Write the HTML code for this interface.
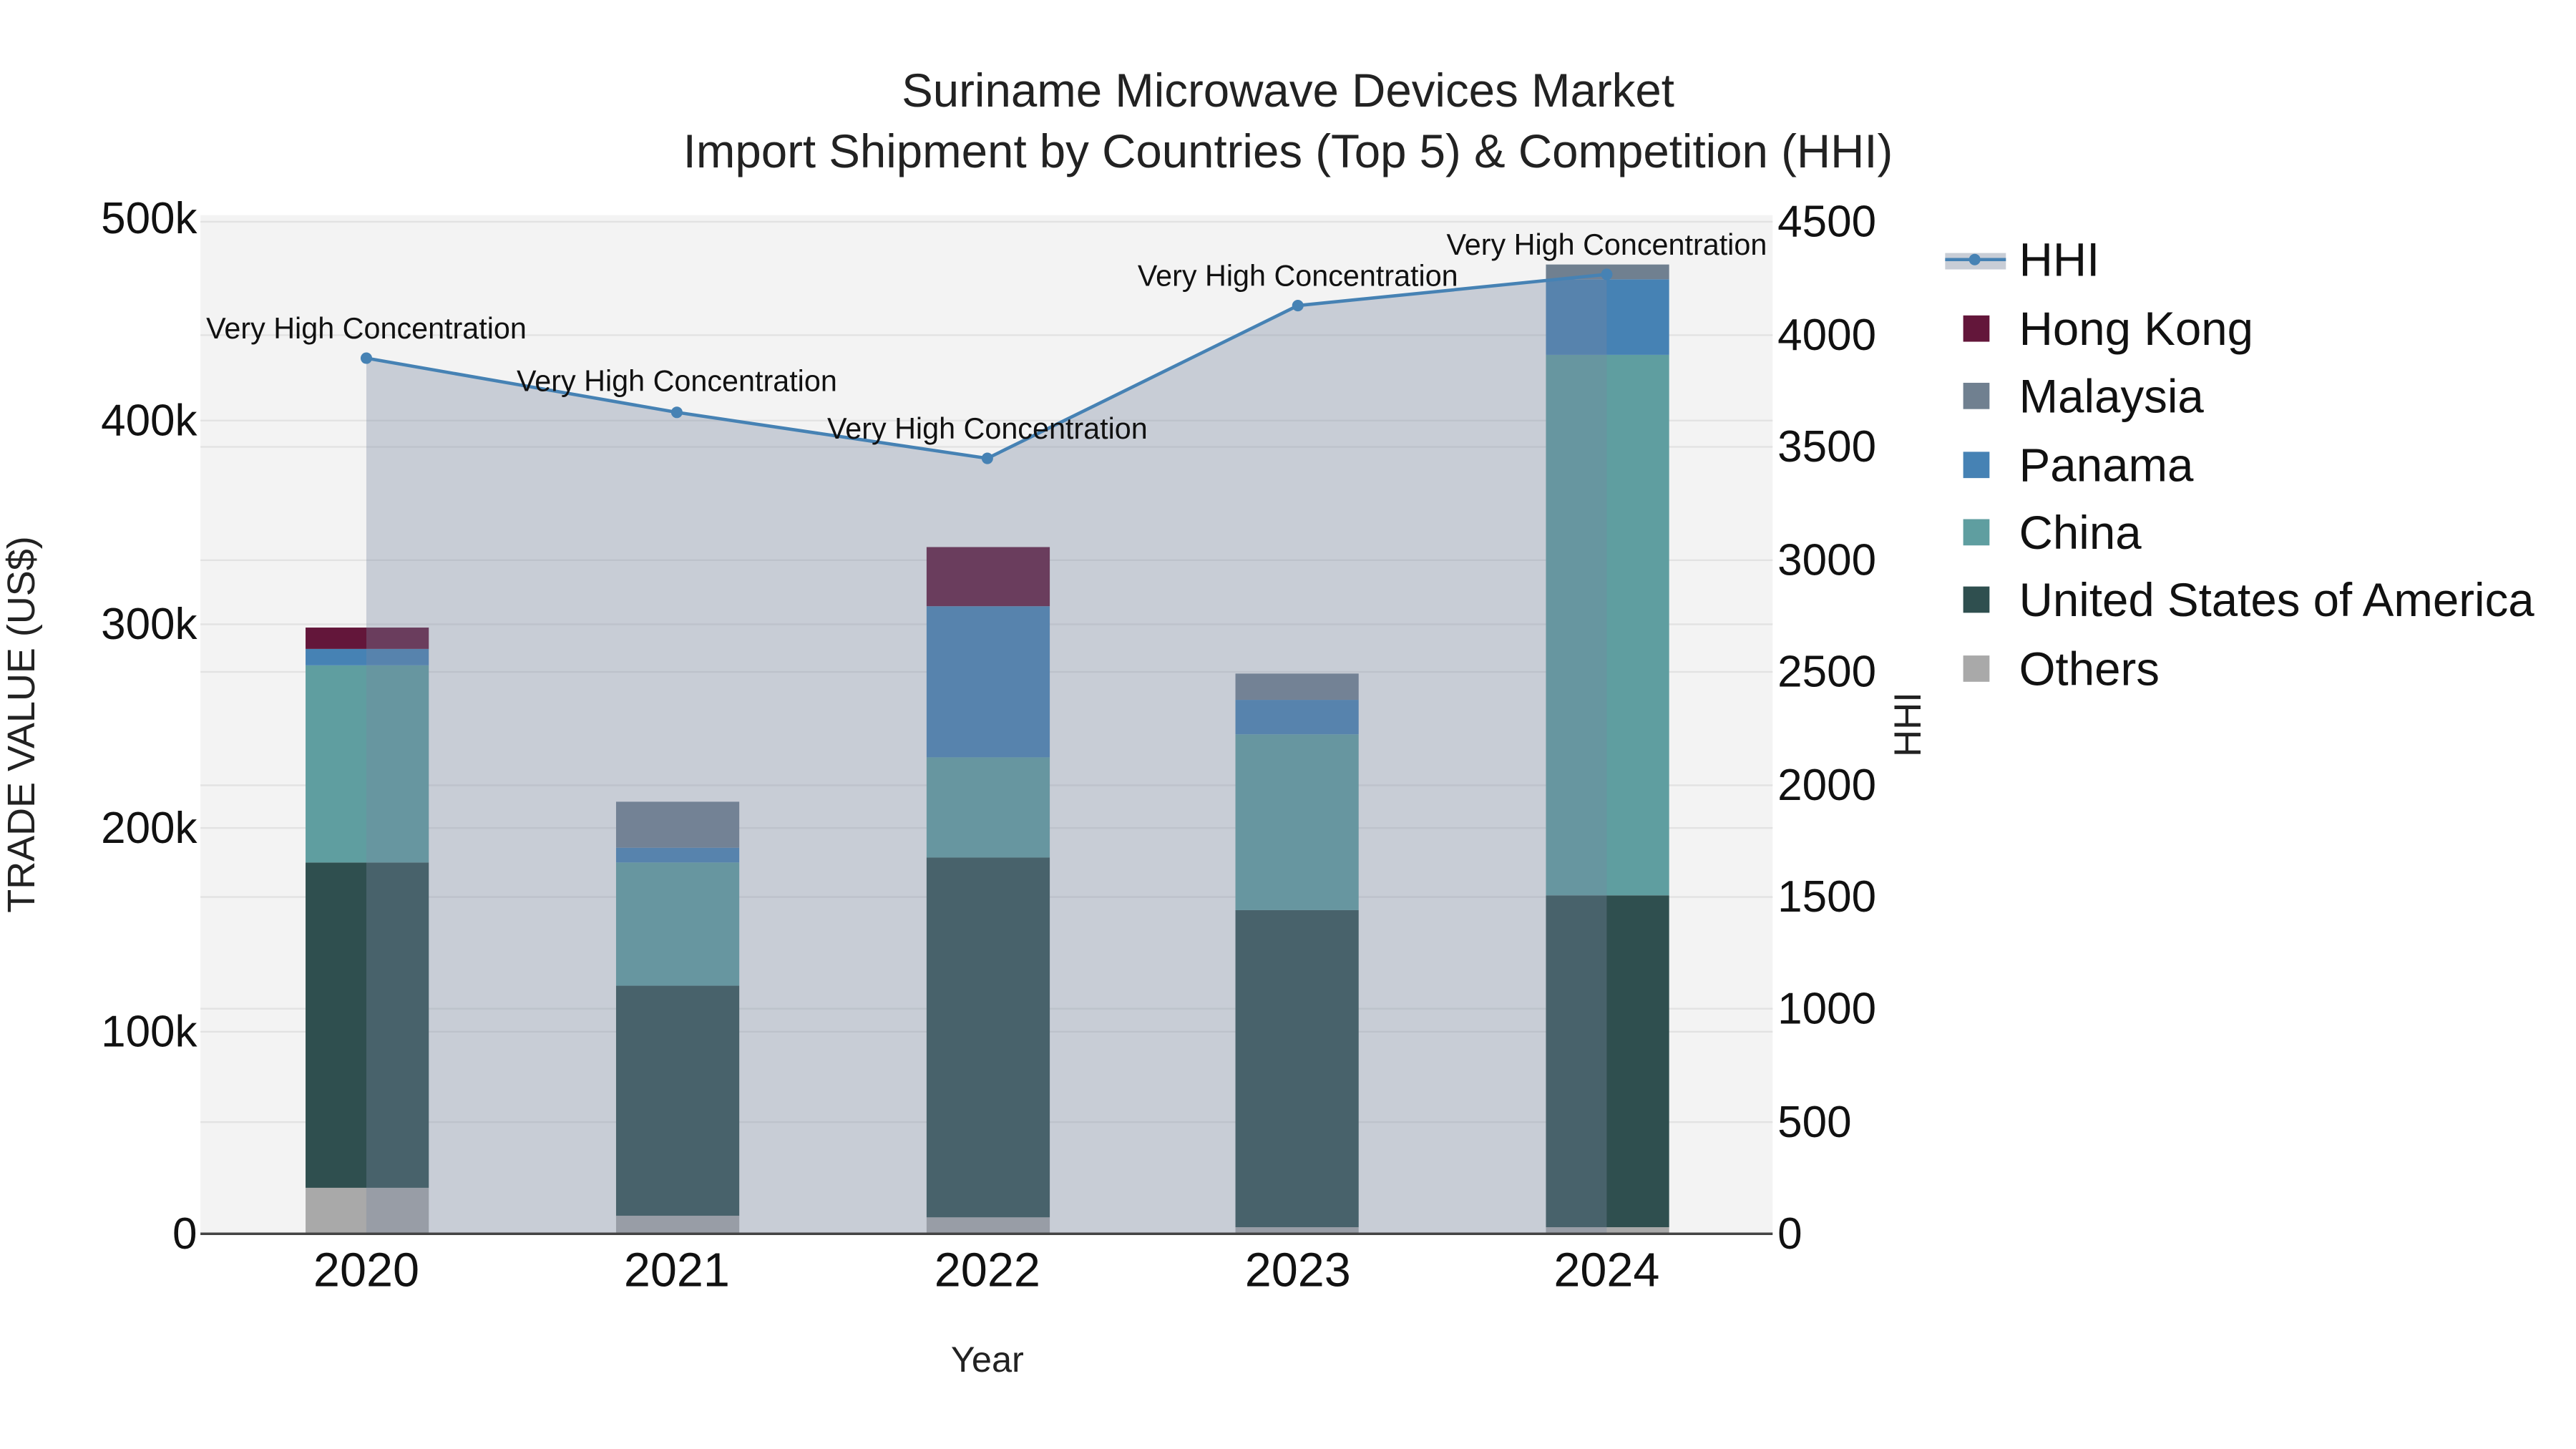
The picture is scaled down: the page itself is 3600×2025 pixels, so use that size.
<!DOCTYPE html>
<html><head><style>html,body{margin:0;padding:0;background:#fff}svg{display:block}</style></head>
<body>
<svg width="3600" height="2025" viewBox="0 0 1568 882" xmlns="http://www.w3.org/2000/svg" font-family="Liberation Sans, Arial, sans-serif">
<rect width="1568" height="882" fill="#fff"/>
<rect x="122" y="131" width="957" height="620" fill="#f3f3f3"/>
<g stroke="#e2e2e2" stroke-width="1">
<line x1="122" x2="1079" y1="135" y2="135"/><line x1="122" x2="1079" y1="204" y2="204"/><line x1="122" x2="1079" y1="272" y2="272"/><line x1="122" x2="1079" y1="341" y2="341"/><line x1="122" x2="1079" y1="409" y2="409"/><line x1="122" x2="1079" y1="478" y2="478"/><line x1="122" x2="1079" y1="546" y2="546"/><line x1="122" x2="1079" y1="614" y2="614"/><line x1="122" x2="1079" y1="683" y2="683"/>
<line x1="122" x2="1079" y1="256" y2="256"/><line x1="122" x2="1079" y1="380" y2="380"/><line x1="122" x2="1079" y1="504" y2="504"/><line x1="122" x2="1079" y1="628" y2="628"/>
</g>
<g>
<rect x="186" y="723" width="75" height="28" fill="#a9a9a9"/><rect x="186" y="525" width="75" height="198" fill="#2f4f4f"/><rect x="186" y="405" width="75" height="120" fill="#5f9ea0"/><rect x="186" y="395" width="75" height="10" fill="#4682b4"/><rect x="186" y="382" width="75" height="13" fill="#63163a"/>
<rect x="375" y="740" width="75" height="11" fill="#a9a9a9"/><rect x="375" y="600" width="75" height="140" fill="#2f4f4f"/><rect x="375" y="525" width="75" height="75" fill="#5f9ea0"/><rect x="375" y="516" width="75" height="9" fill="#4682b4"/><rect x="375" y="488" width="75" height="28" fill="#708090"/>
<rect x="564" y="741" width="75" height="10" fill="#a9a9a9"/><rect x="564" y="522" width="75" height="219" fill="#2f4f4f"/><rect x="564" y="461" width="75" height="61" fill="#5f9ea0"/><rect x="564" y="369" width="75" height="92" fill="#4682b4"/><rect x="564" y="333" width="75" height="36" fill="#63163a"/>
<rect x="752" y="747" width="75" height="4" fill="#a9a9a9"/><rect x="752" y="554" width="75" height="193" fill="#2f4f4f"/><rect x="752" y="447" width="75" height="107" fill="#5f9ea0"/><rect x="752" y="426" width="75" height="21" fill="#4682b4"/><rect x="752" y="410" width="75" height="16" fill="#708090"/>
<rect x="941" y="747" width="75" height="4" fill="#a9a9a9"/><rect x="941" y="545" width="75" height="202" fill="#2f4f4f"/><rect x="941" y="216" width="75" height="329" fill="#5f9ea0"/><rect x="941" y="170" width="75" height="46" fill="#4682b4"/><rect x="941" y="161" width="75" height="9" fill="#708090"/>
</g>
<path d="M223,751 L223,218 L412,251 L601,279 L790,186 L978,167 L978,751 Z" fill="rgb(120,135,160)" fill-opacity="0.35"/>
<polyline points="223,218 412,251 601,279 790,186 978,167" fill="none" stroke="#4682b4" stroke-width="2"/>
<g fill="#4682b4"><circle cx="223" cy="218" r="3.5"/><circle cx="412" cy="251" r="3.5"/><circle cx="601" cy="279" r="3.5"/><circle cx="790" cy="186" r="3.5"/><circle cx="978" cy="167" r="3.5"/></g>
<line x1="122" x2="1079" y1="751" y2="751" stroke="#444" stroke-width="1.5"/>
<g font-size="18" fill="#111" text-anchor="middle">
<text x="223" y="206">Very High Concentration</text><text x="412" y="238">Very High Concentration</text><text x="601" y="267">Very High Concentration</text><text x="790" y="174">Very High Concentration</text><text x="978" y="155">Very High Concentration</text>
</g>
<g font-size="28.5" fill="#222" text-anchor="middle">
<text x="784" y="65">Suriname Microwave Devices Market</text>
<text x="784" y="102">Import Shipment by Countries (Top 5) &amp; Competition (HHI)</text>
</g>
<g font-size="27" fill="#111" text-anchor="end">
<text x="120" y="142">500k</text><text x="120" y="265">400k</text><text x="120" y="389">300k</text><text x="120" y="513">200k</text><text x="120" y="637">100k</text><text x="120" y="760">0</text>
</g>
<g font-size="27" fill="#111" text-anchor="start">
<text x="1082" y="144">4500</text><text x="1082" y="213">4000</text><text x="1082" y="281">3500</text><text x="1082" y="350">3000</text><text x="1082" y="418">2500</text><text x="1082" y="487">2000</text><text x="1082" y="555">1500</text><text x="1082" y="623">1000</text><text x="1082" y="692">500</text><text x="1082" y="760">0</text>
</g>
<g font-size="29" fill="#111" text-anchor="middle">
<text x="223" y="783">2020</text><text x="412" y="783">2021</text><text x="601" y="783">2022</text><text x="790" y="783">2023</text><text x="978" y="783">2024</text>
</g>
<text x="601" y="835" font-size="22" fill="#222" text-anchor="middle">Year</text>
<text transform="translate(21,441) rotate(-90)" font-size="23.5" fill="#222" text-anchor="middle">TRADE VALUE (US$)</text>
<text transform="translate(1169,441) rotate(-90)" font-size="23" fill="#222" text-anchor="middle">HHI</text>
<g font-size="28.5" fill="#111">
<rect x="1184" y="154" width="37" height="10" fill="#c8cdd6"/>
<line x1="1184" x2="1221" y1="158" y2="158" stroke="#4682b4" stroke-width="2"/><circle cx="1202" cy="158" r="3.5" fill="#4682b4"/>
<text x="1229" y="168">HHI</text>
<rect x="1195" y="192" width="16" height="16" fill="#63163a"/><text x="1229" y="210">Hong Kong</text>
<rect x="1195" y="233" width="16" height="16" fill="#708090"/><text x="1229" y="251">Malaysia</text>
<rect x="1195" y="275" width="16" height="16" fill="#4682b4"/><text x="1229" y="293">Panama</text>
<rect x="1195" y="316" width="16" height="16" fill="#5f9ea0"/><text x="1229" y="334">China</text>
<rect x="1195" y="357" width="16" height="16" fill="#2f4f4f"/><text x="1229" y="375">United States of America</text>
<rect x="1195" y="399" width="16" height="16" fill="#a9a9a9"/><text x="1229" y="417">Others</text>
</g>
</svg>
</body></html>
